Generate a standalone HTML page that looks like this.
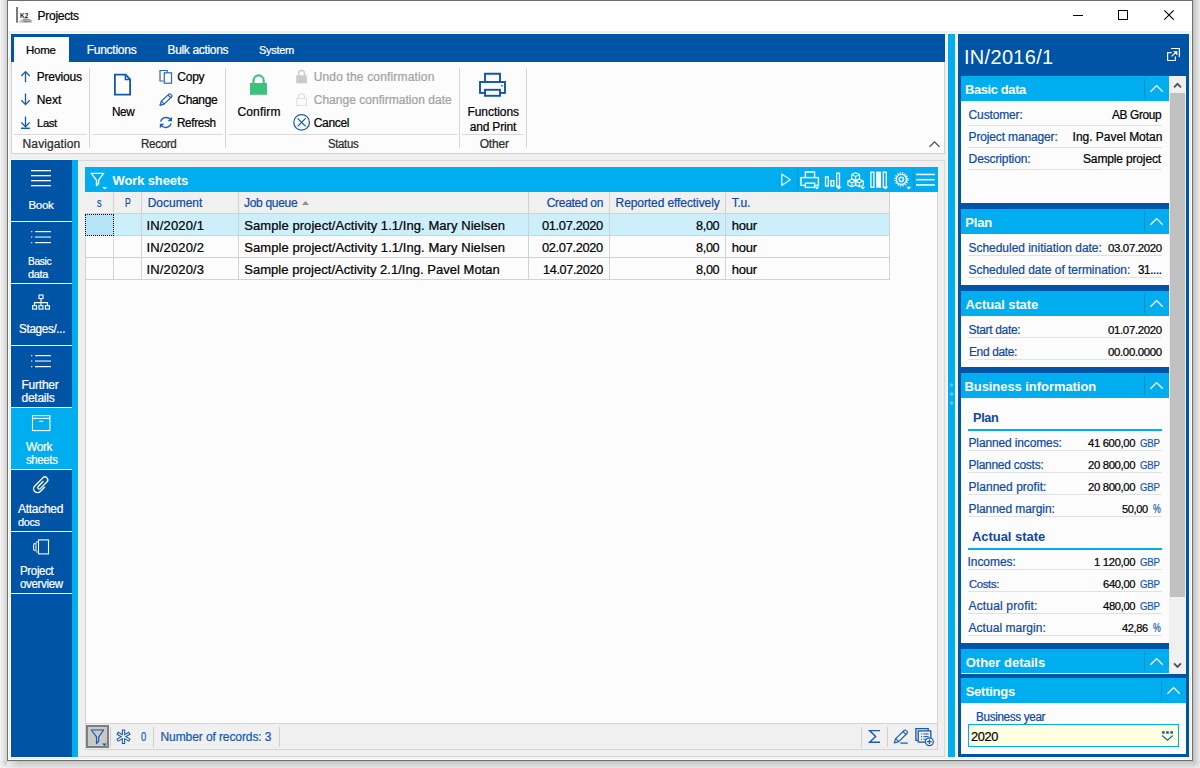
<!DOCTYPE html>
<html lang="en">
<head>
<meta charset="utf-8">
<title>Projects</title>
<style>
*{box-sizing:border-box;margin:0;padding:0}
html,body{width:1200px;height:768px;overflow:hidden}
body{position:relative;background:#e4e4e4;font-family:"Liberation Sans",sans-serif;font-size:12px;color:#000}
.a,.t,.vs,.hs,.sl,.sec,.bd,.rl,.cl,.gl{position:absolute}
.t{white-space:nowrap;-webkit-text-stroke:0.22px currentColor}
svg{position:absolute;overflow:visible}
#shl{left:0;top:0;width:7px;height:761px;background:linear-gradient(90deg,#f6f6f6,#d2d2d2)}
#shr{left:1193px;top:0;width:7px;height:761px;background:linear-gradient(90deg,#c2c2c2,#ececec)}
#shb{left:7px;top:761px;width:1186px;height:7px;background:linear-gradient(180deg,#c5c5c5,#e3e3e3)}
#shc3{left:7px;top:761px;width:12px;height:7px;background:linear-gradient(90deg,rgba(238,238,238,.85),rgba(238,238,238,0))}
#shc1{left:0;top:761px;width:7px;height:7px;background:radial-gradient(circle at 100% 0,#c4c4c4,#f0f0f0 7px)}
#shc2{left:1193px;top:761px;width:7px;height:7px;background:radial-gradient(circle at 0 0,#bdbdbd,#e6e6e6 7px)}
#win{left:7px;top:0;width:1186px;height:761px;background:#f0f0f0;border:1px solid #6f6f6f;box-shadow:inset 0 0 0 1px #fff}
#title{left:8px;top:1px;width:1184px;height:30px;background:#fff}
#botw{left:10px;top:159px;width:69px;height:599px;background:#fbf8f6}
#tabbar{left:11px;top:34px;width:934px;height:28px;background:#0054a6;box-shadow:0 0 0 1px #fbf8f6}
#tabhome{left:14px;top:37px;width:55px;height:26px;background:#fcfcfc}
#ribbon{left:11px;top:62px;width:934px;height:92px;background:#fcfcfc;border:1px solid #d2d2d2;border-top:none}
.vs{width:1px;background:#d6d6d6;top:68px;height:80px}
.hs{height:1px;background:#d9d9d9;top:134px}
#side{left:11px;top:160px;width:61px;height:597px;background:#0054a6}
#sidecy{left:72px;top:160px;width:6px;height:597px;background:#00adee}
#sidesel{left:11px;top:408px;width:61px;height:61px;background:#00adee}
.sl{left:11px;width:61px;height:1px;background:#fff}
#cframe{left:78px;top:160px;width:867px;height:597px;border:1px solid #d9d9d9;border-left:none}
#gpanel{left:85px;top:192px;width:853px;height:558px;background:#fcfcfc;border:1px solid #d4d4d4;border-top:none}
#ghead{left:85px;top:167px;width:853px;height:25px;background:#00adee}
#colh{left:85px;top:192px;width:805px;height:22px;background:#f0f0f0;border-bottom:1px solid #d2d2d2;border-right:1px solid #d2d2d2}
#rowsel{left:85px;top:214px;width:804px;height:21px;background:#cdeefb}
#cellsel{left:85px;top:214px;width:29px;height:22px;background:#b5e4f8;border:1px dotted #000}
.cl{width:1px;background:#d2d2d2;top:192px;height:88px}
.gl{height:1px;background:#d2d2d2;left:85px;width:805px}
#sbar{left:86px;top:723px;width:851px;height:26px;background:#f0f0f0;border-top:1px solid #d4d4d4}
#fbtn{left:86px;top:725px;width:23px;height:23px;background:#c9c9c9;border:2px solid #7e7e7e}
.ss{position:absolute;width:1px;background:#d0d0d0;top:727px;height:20px}
#split{left:948px;top:34px;width:7px;height:723px;background:#00adee;box-shadow:0 0 0 1px #fbf8f6}
#rpanel{left:958px;top:34px;width:231px;height:723px;background:#0054a6;box-shadow:0 0 0 1px #fbf8f6}
.sec{left:961px;width:208px;height:25px;background:#00adee}
.sec i{position:absolute;left:183px;top:2px;width:1px;height:21px;background:#0090cc}
.bd{left:961px;width:208px;background:#fcfcfc}
.rl{left:968px;width:194px;height:1px;background:#e1e1e1}
.cy{position:absolute;left:968px;width:194px;height:2px;background:#00adee}
#scr{left:1169px;top:76px;width:17px;height:598px;background:#f0f0f0}
#thumb{left:1170px;top:93px;width:15px;height:504px;background:#c1c1c1}
#inp{left:968px;top:724px;width:211px;height:23px;background:#ffffe1;border:1px solid #00adee}
</style>
</head>
<body>
<div class="a" id="shl"></div><div class="a" id="shr"></div><div class="a" id="shb"></div><div class="a" id="shc1"></div><div class="a" id="shc3"></div><div class="a" id="shc2"></div>
<div class="a" id="win"></div>
<div class="a" id="title"></div>
<div class="a" id="botw"></div>
<div class="a" id="tabbar"></div>
<div class="a" id="tabhome"></div>
<div class="a" id="ribbon"></div>
<div class="vs" style="left:89px"></div><div class="vs" style="left:225px"></div><div class="vs" style="left:459px"></div><div class="vs" style="left:526px"></div>
<div class="hs" style="left:14px;width:73px"></div><div class="hs" style="left:92px;width:131px"></div><div class="hs" style="left:228px;width:229px"></div><div class="hs" style="left:462px;width:62px"></div>
<div class="a" id="side"></div><div class="a" id="sidecy"></div><div class="a" id="sidesel"></div>
<div class="sl" style="top:221px"></div><div class="sl" style="top:283px"></div><div class="sl" style="top:345px"></div><div class="sl" style="top:407px"></div><div class="sl" style="top:469px"></div><div class="sl" style="top:531px"></div><div class="sl" style="top:593px"></div>
<div class="a" id="cframe"></div>
<div class="a" id="gpanel"></div><div class="a" id="ghead"></div>
<div class="a" id="colh"></div>
<div class="a" id="rowsel"></div>
<div class="gl" style="top:235px"></div><div class="gl" style="top:257px"></div><div class="gl" style="top:279px"></div>
<div class="cl" style="left:113px"></div><div class="cl" style="left:141px"></div><div class="cl" style="left:238px"></div><div class="cl" style="left:528px"></div><div class="cl" style="left:609px"></div><div class="cl" style="left:725px"></div><div class="cl" style="left:889px"></div>
<div class="a" id="cellsel"></div>
<div class="a" id="sbar"></div><div class="a" id="fbtn"></div>
<div class="ss" style="left:110px"></div><div class="ss" style="left:153px"></div><div class="ss" style="left:279px"></div><div class="ss" style="left:861px"></div><div class="ss" style="left:887px"></div>
<div class="a" id="split"></div>
<div class="a" id="rpanel"></div>
<div class="a" id="scr"></div><div class="a" id="thumb"></div>
<div class="sec" style="top:76px"><i></i></div><div class="bd" style="top:101px;height:102px"></div>
<div class="rl" style="top:125px"></div><div class="rl" style="top:147px"></div><div class="rl" style="top:169px"></div>
<div class="sec" style="top:209px"><i></i></div><div class="bd" style="top:234px;height:51px"></div>
<div class="rl" style="top:255px"></div><div class="rl" style="top:277px"></div>
<div class="sec" style="top:291px"><i></i></div><div class="bd" style="top:316px;height:51px"></div>
<div class="rl" style="top:337px"></div><div class="rl" style="top:359px"></div>
<div class="sec" style="top:373px"><i></i></div><div class="bd" style="top:398px;height:245px"></div>
<div class="cy" style="top:429px"></div>
<div class="rl" style="top:450px"></div><div class="rl" style="top:472px"></div><div class="rl" style="top:494px"></div><div class="rl" style="top:516px"></div>
<div class="cy" style="top:548px"></div>
<div class="rl" style="top:569px"></div><div class="rl" style="top:591px"></div><div class="rl" style="top:613px"></div><div class="rl" style="top:635px"></div>
<div class="sec" style="top:649px;height:24px"><i></i></div><div class="bd" style="top:673px;height:1px"></div>
<div class="sec" style="top:678px;width:225px"><i style="left:200px"></i></div><div class="bd" style="top:703px;height:51px;width:225px"></div>
<div class="a" id="inp"></div>
<svg width="1200" height="768" viewBox="0 0 1200 768" style="left:0;top:0" fill="none">
<!-- title bar -->
<g id="appicon">
<defs><linearGradient id="k2g" x1="0" y1="0" x2="1" y2="0"><stop offset="0" stop-color="#b0b0b0" stop-opacity=".45"/><stop offset=".5" stop-color="#7c7c7c"/><stop offset="1" stop-color="#8e8e8e" stop-opacity=".9"/></linearGradient></defs>
<rect x="16" y="7" width="2" height="15.6" fill="#7b7b7b"/>
<path d="M18 22.6V21.4C21 20.6 22.5 18.6 25.5 18.4C28 18.3 30 19.2 31.6 20V22.6Z" fill="url(#k2g)"/>
<path d="M21.5 21.6C24 20 27 19.6 30.5 20.9" stroke="#d8d8d8" stroke-width="0.7"/>
<text x="20" y="17.8" font-family="Liberation Sans, sans-serif" font-size="6.4" font-weight="bold" fill="#1a1a1a" textLength="8.2" lengthAdjust="spacingAndGlyphs">K2</text>
</g>
<g stroke="#000" stroke-width="1">
<path d="M1073 15.5H1083"/>
<rect x="1118.5" y="10.5" width="9" height="9"/>
<path d="M1164.3 10.3L1173.7 19.7M1173.7 10.3L1164.3 19.7" stroke-width="1.1"/>
</g>
<!-- ribbon: navigation arrows -->
<g stroke="#1659b0" stroke-width="1.3" stroke-linecap="butt">
<path d="M25.5 82.3V71.8M21.3 76L25.5 71.6L29.7 76"/>
<path d="M25.5 93.6V104.4M21.3 100.2L25.5 104.6L29.7 100.2"/>
<path d="M25.5 116.6V126.6M21.3 122.4L25.5 126.8L29.7 122.4"/>
<path d="M21 128.3H30" stroke-width="1.5"/>
</g>
<!-- New -->
<g stroke="#1258ad" stroke-width="1.8" stroke-linejoin="miter">
<path d="M114.9 74.6H125.6L130.1 79.4V94.7H114.9Z"/>
<path d="M125.4 74.6V79.6H130.1" stroke-width="1.5"/>
</g>
<!-- Copy -->
<g stroke="#2b68b8" stroke-width="1.2">
<path d="M163.6 81H160V70.5H167.2V72.4"/>
<rect x="164.3" y="72.8" width="7.2" height="10.4"/>
</g>
<!-- pencil (Change) -->
<g stroke="#1f5fb3" stroke-width="1.2" stroke-linejoin="round">
<path d="M160 105.3L161.3 101.2L169.2 93.9C170 93.3 172.6 95.6 171.9 96.5L164.1 104.1Z"/>
<path d="M161.3 101.2L164.1 104.1M168 95L170.8 97.7"/>
</g>
<!-- Refresh -->
<g stroke="#1f5fb3" stroke-width="1.3">
<path d="M160.7 121.6C161.6 117.6 167.2 116 170.4 119.4"/>
<path d="M171.1 123.4C170.2 127.4 164.6 129 161.4 125.6"/>
</g>
<path d="M172 116.7V121.3H167.5Z" fill="#1f5fb3"/>
<path d="M159.8 128.3V123.7H164.3Z" fill="#1f5fb3"/>
<!-- green lock -->
<rect x="250" y="83" width="17" height="11.8" fill="#3ec17e"/>
<path d="M253.5 83.5V80.6A5.1 5.2 0 0 1 263.7 80.6V83.5" stroke="#3ec17e" stroke-width="2.2"/>
<!-- grey filled lock -->
<rect x="296.2" y="75.3" width="10.7" height="8" fill="#c9cacc"/>
<path d="M298.7 75.8V73.4A2.9 2.9 0 0 1 304.5 73.4V75.8" stroke="#c9cacc" stroke-width="1.3"/>
<!-- outlined lock -->
<rect x="296.7" y="98.5" width="9.7" height="6.9" stroke="#dedede" stroke-width="1"/>
<path d="M298.7 98.5V96.7A2.9 2.9 0 0 1 304.5 96.7V98.5" stroke="#dedede" stroke-width="1.1"/>
<!-- cancel -->
<g stroke="#1a5caa" stroke-width="1.25">
<circle cx="301.6" cy="122.4" r="7.8"/>
<path d="M297.6 118.4L305.6 126.4M305.6 118.4L297.6 126.4"/>
</g>
<!-- printer big -->
<g stroke="#0d57a9" stroke-width="1.9">
<path d="M485 82V73.8H500V82"/>
<rect x="480" y="82" width="25" height="10.9"/>
<rect x="485" y="89.8" width="15" height="6" fill="#fcfcfc"/>
</g>
<rect x="501.2" y="85" width="1.6" height="1.3" fill="#0d57a9"/>
<!-- ribbon collapse caret -->
<path d="M929.5 146.8L934.5 141.8L939.5 146.8" stroke="#444" stroke-width="1.2"/>
</svg>

<svg width="1200" height="768" viewBox="0 0 1200 768" style="left:0;top:0" fill="none">
<!-- sidebar: Book hamburger -->
<g fill="#fff">
<rect x="31" y="170" width="20" height="1.3"/><rect x="31" y="175" width="20" height="1.3"/><rect x="31" y="180" width="20" height="1.3"/><rect x="31" y="185" width="20" height="1.3"/>
</g>
<!-- list icons -->
<g fill="#fff" id="lst1">
<rect x="35" y="231" width="16" height="1.2"/><rect x="35" y="236.4" width="16" height="1.3" opacity=".8"/><rect x="35" y="242" width="16" height="1.2"/>
<rect x="31" y="231" width="1.3" height="1.2"/><rect x="31" y="236.4" width="1.3" height="1.3" opacity=".8"/><rect x="31" y="242" width="1.3" height="1.2"/>
</g>
<g fill="#fff" id="lst2">
<rect x="35" y="355" width="16" height="1.2"/><rect x="35" y="360.4" width="16" height="1.3" opacity=".8"/><rect x="35" y="366" width="16" height="1.2"/>
<rect x="31" y="355" width="1.3" height="1.2"/><rect x="31" y="360.4" width="1.3" height="1.3" opacity=".8"/><rect x="31" y="366" width="1.3" height="1.2"/>
</g>
<!-- stages org chart -->
<g stroke="#fff" stroke-width="1.1">
<rect x="39" y="295" width="4" height="3.6"/>
<path d="M41 298.6V305.2M34.5 305.4V302.6H47.5V305.4"/>
<rect x="32.6" y="305.7" width="4" height="3.4"/><rect x="39" y="305.7" width="4" height="3.4"/><rect x="45.4" y="305.7" width="4" height="3.4"/>
</g>
<!-- work sheets box -->
<g stroke="#fff" stroke-width="1.1">
<rect x="32.5" y="415.6" width="17.4" height="15"/>
<path d="M32.5 418.4H49.9"/>
<path d="M39.2 421.3H43.2" stroke-width="1.2" opacity=".85"/>
</g>
<!-- paperclip -->
<g transform="translate(41.2 485) rotate(45)" stroke="#fff" stroke-width="1.35" stroke-linecap="round">
<path d="M3.9 -0.8V5.2A3.9 3.9 0 0 1 -3.9 5.2V-6.2A2.9 2.9 0 0 1 1.9 -6.2V3.2A1.5 1.5 0 0 1 -1.1 3.2V-3.8"/>
</g>
<!-- project overview -->
<g stroke="#fff" stroke-width="1.1">
<rect x="38.5" y="539.9" width="10" height="14"/>
<path d="M38.3 541.9H36.6C35.6 541.9 35.6 552 36.6 552H38.3" opacity=".75"/>
<path d="M35.4 543.6H34.4C33.3 543.6 33.3 550.4 34.4 550.4H35.4"/>
</g>
<!-- grid header: filter -->
<g stroke="#fff" stroke-width="1.4" stroke-linejoin="round">
<path d="M91.3 173.4H103.7L98.6 180.2V183.4L96.5 185.6V180.2Z"/>
</g>
<path d="M102.2 187H107.2L104.7 189.5Z" fill="#fff"/>
<!-- play -->
<path d="M781.8 174V185.4L790.3 179.7Z" stroke="#fff" stroke-width="1.3" stroke-linejoin="round" opacity=".85"/>
<path d="M797.5 169V190M913.5 169V190" stroke="#0091cf" stroke-width="1"/>
<!-- printer small -->
<g stroke="#fff" stroke-width="1.4">
<path d="M805.4 177.5V172H814.6V177.5"/>
<rect x="801" y="177.6" width="17.4" height="7.8"/>
<rect x="805.4" y="183.2" width="9.2" height="4.2" fill="#00adee"/>
</g>
<path d="M814.4 186.7H819.4L816.9 189.4Z" fill="#fff"/>
<!-- bar chart -->
<g stroke="#fff" stroke-width="1.3">
<rect x="825.5" y="177" width="2.8" height="9"/><rect x="831" y="180.6" width="2.8" height="5.4"/><rect x="836.7" y="173.2" width="2.8" height="13"/>
</g>
<path d="M835.7 186.7H841.7L838.7 189.6Z" fill="#fff"/>
<!-- cubes -->
<g stroke="#fff" stroke-width="1.15" stroke-linejoin="round">
<path d="M855.6 172.8L859.6 174.6V178.6L855.6 180.4L851.6 178.6V174.6Z"/><path d="M851.6 174.6L855.6 176.4L859.6 174.6M855.6 176.4V180.4"/>
<path d="M851.9 179.2L855.9 181V185L851.9 186.8L847.9 185V181Z"/><path d="M847.9 181L851.9 182.8L855.9 181M851.9 182.8V186.8"/>
<path d="M859.3 179.2L863.3 181V185L859.3 186.8L855.3 185V181Z"/><path d="M855.3 181L859.3 182.8L863.3 181M859.3 182.8V186.8"/>
</g>
<path d="M860.3 186.8H865.3L862.8 189.5Z" fill="#fff"/>
<!-- columns -->
<rect x="870.9" y="172.2" width="3" height="15" stroke="#fff" stroke-width="1.3"/>
<rect x="876.2" y="171.6" width="4.8" height="16.1" fill="#fff"/>
<rect x="883.3" y="172.2" width="3" height="15" stroke="#fff" stroke-width="1.3"/>
<path d="M882.4 186.8H888.4L885.4 189.6Z" fill="#fff"/>
<!-- gear -->
<g stroke="#fff">
<circle cx="901.4" cy="179.4" r="5" stroke-width="1.3"/>
<circle cx="901.4" cy="179.4" r="2.1" stroke-width="1.4"/>
<circle cx="901.4" cy="179.4" r="6.4" stroke-width="1.5" stroke-dasharray="1.2 1.313"/>
</g>
<path d="M906.1 186.8H911.3L908.7 189.6Z" fill="#fff"/>
<!-- hamburger -->
<g fill="#fff"><rect x="916" y="173.7" width="19" height="1.5"/><rect x="916" y="178.9" width="19" height="1.5"/><rect x="916" y="184.2" width="19" height="1.5"/></g>
<!-- sort arrow -->
<path d="M302 205H309L305.5 201Z" fill="#8f8f8f"/>
</svg>

<svg width="1200" height="768" viewBox="0 0 1200 768" style="left:0;top:0" fill="none">
<!-- status: filter button icon -->
<path d="M91.3 730H103.7L98.7 736.9V741.2L96.5 743.6V736.9Z" stroke="#1659b0" stroke-width="1.2" stroke-linejoin="round"/>
<path d="M102 743.6H107L104.5 746.1Z" fill="#1659b0"/>
<!-- snowflake -->
<g stroke="#1659b0" stroke-width="3.4" stroke-linecap="butt">
<path d="M123.5 729.4V744M117.2 733L129.8 740.4M129.8 733L117.2 740.4"/>
</g>
<g stroke="#f0f0f0" stroke-width="1.3" stroke-linecap="butt">
<path d="M123.5 730.4V743M118.1 733.5L128.9 739.9M128.9 733.5L118.1 739.9"/>
</g>
<!-- sigma -->
<path d="M880 730.6H869.6L875.6 736.4L869.6 742.2H880" stroke="#1a5caa" stroke-width="1.4" stroke-linejoin="miter"/>
<!-- pencil with underline -->
<g stroke="#1f5fb3" stroke-width="1.2" stroke-linejoin="round">
<path d="M894.3 743L895.7 738.6L904.4 730.2C905.3 729.4 908.2 732 907.4 733L898.8 741.6Z"/>
<path d="M895.7 738.6L898.8 741.6M903 731.6L906 734.4"/>
<path d="M900.4 743.1H907.8" stroke-width="1.3"/>
</g>
<!-- docs + -->
<g stroke="#1659b0" stroke-width="1.3">
<path d="M917.6 740.4H915.9V728.6H928.2V730.4"/>
<rect x="918.2" y="730.9" width="12.6" height="11.2" fill="#f0f0f0"/>
<path d="M921 734H922.2M923.4 734H928.6M921 736.6H922.2M923.4 736.6H928.6M921 739.2H922.2M923.4 739.2H926" stroke-width="1"/>
<circle cx="929.4" cy="741.7" r="3.9" fill="#f0f0f0" stroke-width="1.2"/>
<path d="M927.2 741.7H931.6M929.4 739.5V743.9" stroke-width="1.2"/>
</g>
<!-- right panel popup icon -->
<g stroke="#fff" stroke-width="1.2">
<path d="M1171 48.5H1179.4V57"/>
<path d="M1171.6 52.7H1167.6V60.5H1175.4V56.6"/>
<path d="M1171.5 56.4L1176.3 52"/>
</g>
<path d="M1173.2 51.2H1177.4V55.4Z" fill="#fff"/>
<!-- chevrons -->
<g stroke="#fff" stroke-width="1.3">
<path d="M1150.4 91.8L1156.6 85.6L1162.8 91.8"/>
<path d="M1150.4 224.8L1156.6 218.6L1162.8 224.8"/>
<path d="M1150.4 306.8L1156.6 300.6L1162.8 306.8"/>
<path d="M1150.4 388.8L1156.6 382.6L1162.8 388.8"/>
<path d="M1150.4 664.8L1156.6 658.6L1162.8 664.8"/>
<path d="M1167.4 693.8L1173.6 687.6L1179.8 693.8"/>
</g>
<!-- scrollbar arrows -->
<g stroke="#505050" stroke-width="1.8">
<path d="M1174 87.4L1177.5 83.8L1181 87.4"/>
<path d="M1174 663.4L1177.5 667L1181 663.4"/>
</g>
<!-- input dropdown -->
<g fill="#1f5cae"><rect x="1162" y="731.2" width="2.7" height="2.5"/><rect x="1166.1" y="731.2" width="2.7" height="2.5"/><rect x="1170.3" y="731.2" width="2.7" height="2.5"/></g>
<path d="M1162.2 735.5L1167.5 740.2L1172.8 735.5" stroke="#1f5cae" stroke-width="1.2"/>
<!-- splitter dots -->
<g fill="#55c9f4"><circle cx="951.6" cy="385" r="1.8"/><circle cx="951.6" cy="394" r="1.8"/><circle cx="951.6" cy="403" r="1.8"/></g>
</svg>

<!--ICONS4-->
<span class="t" style="left:37.50px;top:9.00px;font-size:12px;line-height:14px;letter-spacing:-0.264px;color:#000">Projects</span>
<span class="t" style="left:26.00px;top:43.00px;font-size:11.5px;line-height:14px;letter-spacing:-0.260px;color:#000">Home</span>
<span class="t" style="left:86.70px;top:43.00px;font-size:12px;line-height:14px;letter-spacing:-0.253px;color:#fff">Functions</span>
<span class="t" style="left:167.50px;top:43.00px;font-size:12px;line-height:14px;letter-spacing:-0.336px;color:#fff">Bulk actions</span>
<span class="t" style="left:259.00px;top:43.00px;font-size:11.5px;line-height:14px;letter-spacing:-0.350px;color:#fff;transform:scaleX(0.964);transform-origin:0 0">System</span>
<span class="t" style="left:36.74px;top:70.00px;font-size:12px;line-height:14px;letter-spacing:-0.204px;color:#000">Previous</span>
<span class="t" style="left:36.74px;top:93.00px;font-size:12px;line-height:14px;letter-spacing:-0.060px;color:#000">Next</span>
<span class="t" style="left:37.30px;top:116.00px;font-size:11.5px;line-height:14px;letter-spacing:-0.350px;color:#000;transform:scaleX(0.975);transform-origin:0 0">Last</span>
<span class="t" style="left:22.60px;top:137.00px;font-size:12px;line-height:14px;letter-spacing:0.108px;color:#2a2a2a">Navigation</span>
<span class="t" style="left:111.80px;top:105.00px;font-size:12px;line-height:14px;letter-spacing:-0.350px;color:#000;transform:scaleX(0.977);transform-origin:0 0">New</span>
<span class="t" style="left:177.30px;top:70.00px;font-size:12px;line-height:14px;letter-spacing:-0.238px;color:#000">Copy</span>
<span class="t" style="left:177.30px;top:93.00px;font-size:12px;line-height:14px;letter-spacing:-0.332px;color:#000">Change</span>
<span class="t" style="left:177.30px;top:116.00px;font-size:12px;line-height:14px;letter-spacing:-0.350px;color:#000;transform:scaleX(0.976);transform-origin:0 0">Refresh</span>
<span class="t" style="left:140.50px;top:137.00px;font-size:12px;line-height:14px;letter-spacing:-0.350px;color:#2a2a2a;transform:scaleX(0.970);transform-origin:0 0">Record</span>
<span class="t" style="left:237.40px;top:105.00px;font-size:12px;line-height:14px;letter-spacing:0.182px;color:#000">Confirm</span>
<span class="t" style="left:313.70px;top:70.00px;font-size:12px;line-height:14px;letter-spacing:0.164px;color:#a2a2a2">Undo the confirmation</span>
<span class="t" style="left:313.70px;top:93.00px;font-size:12px;line-height:14px;letter-spacing:0.024px;color:#a2a2a2">Change confirmation date</span>
<span class="t" style="left:313.70px;top:116.00px;font-size:12px;line-height:14px;letter-spacing:-0.317px;color:#000">Cancel</span>
<span class="t" style="left:327.60px;top:137.00px;font-size:12px;line-height:14px;letter-spacing:-0.350px;color:#2a2a2a;transform:scaleX(0.948);transform-origin:0 0">Status</span>
<span class="t" style="left:467.50px;top:105.00px;font-size:12px;line-height:14px;letter-spacing:-0.066px;color:#000">Functions</span>
<span class="t" style="left:469.70px;top:120.00px;font-size:12px;line-height:14px;letter-spacing:-0.174px;color:#000">and Print</span>
<span class="t" style="left:479.70px;top:137.00px;font-size:12px;line-height:14px;letter-spacing:-0.179px;color:#2a2a2a">Other</span>
<span class="t" style="left:28.50px;top:198.00px;font-size:11.5px;line-height:14px;letter-spacing:-0.321px;color:#fff">Book</span>
<span class="t" style="left:27.50px;top:254.00px;font-size:11.5px;line-height:14px;letter-spacing:-0.350px;color:#fff;transform:scaleX(0.885);transform-origin:0 0">Basic</span>
<span class="t" style="left:27.50px;top:267.00px;font-size:11.5px;line-height:14px;letter-spacing:-0.350px;color:#fff;transform:scaleX(0.958);transform-origin:0 0">data</span>
<span class="t" style="left:18.50px;top:322.00px;font-size:12px;line-height:14px;letter-spacing:-0.350px;color:#fff;transform:scaleX(0.976);transform-origin:0 0">Stages/...</span>
<span class="t" style="left:21.50px;top:378.00px;font-size:12px;line-height:14px;letter-spacing:-0.230px;color:#fff">Further</span>
<span class="t" style="left:21.50px;top:391.00px;font-size:12px;line-height:14px;letter-spacing:-0.248px;color:#fff">details</span>
<span class="t" style="left:25.60px;top:440.00px;font-size:12px;line-height:14px;letter-spacing:-0.350px;color:#fff;transform:scaleX(0.992);transform-origin:0 0">Work</span>
<span class="t" style="left:25.60px;top:453.00px;font-size:12px;line-height:14px;letter-spacing:-0.350px;color:#fff;transform:scaleX(0.949);transform-origin:0 0">sheets</span>
<span class="t" style="left:18.08px;top:502.00px;font-size:12px;line-height:14px;letter-spacing:-0.296px;color:#fff">Attached</span>
<span class="t" style="left:17.60px;top:515.00px;font-size:11.5px;line-height:14px;letter-spacing:-0.350px;color:#fff;transform:scaleX(0.950);transform-origin:0 0">docs</span>
<span class="t" style="left:19.50px;top:564.00px;font-size:12px;line-height:14px;letter-spacing:-0.350px;color:#fff;transform:scaleX(0.958);transform-origin:0 0">Project</span>
<span class="t" style="left:19.50px;top:577.00px;font-size:12px;line-height:14px;letter-spacing:-0.350px;color:#fff;transform:scaleX(0.962);transform-origin:0 0">overview</span>
<span class="t" style="left:112.60px;top:173.00px;font-size:13px;line-height:15px;letter-spacing:-0.144px;color:#fff;font-weight:bold;-webkit-text-stroke:0">Work sheets</span>
<span class="t" style="left:97.40px;top:196.00px;font-size:12px;line-height:14px;letter-spacing:0.000px;color:#10499f;transform:scaleX(0.767);transform-origin:0 0">s</span>
<span class="t" style="left:124.60px;top:196.00px;font-size:12px;line-height:14px;letter-spacing:0.000px;color:#10499f;transform:scaleX(0.713);transform-origin:0 0">P</span>
<span class="t" style="left:147.70px;top:196.00px;font-size:12px;line-height:14px;letter-spacing:-0.008px;color:#10499f">Document</span>
<span class="t" style="left:244.00px;top:196.00px;font-size:12px;line-height:14px;letter-spacing:-0.297px;color:#10499f">Job queue</span>
<span class="t" style="left:546.70px;top:196.00px;font-size:12px;line-height:14px;letter-spacing:-0.295px;color:#10499f">Created on</span>
<span class="t" style="left:615.60px;top:196.00px;font-size:12px;line-height:14px;letter-spacing:-0.091px;color:#10499f">Reported effectively</span>
<span class="t" style="left:731.70px;top:196.00px;font-size:12px;line-height:14px;letter-spacing:-0.236px;color:#10499f">T.u.</span>
<span class="t" style="left:146.50px;top:218.00px;font-size:13px;line-height:15px;letter-spacing:0.145px;color:#000">IN/2020/1</span>
<span class="t" style="left:244.30px;top:218.00px;font-size:13px;line-height:15px;letter-spacing:0.061px;color:#000">Sample project/Activity 1.1/Ing. Mary Nielsen</span>
<span class="t" style="left:542.30px;top:218.00px;font-size:13px;line-height:15px;letter-spacing:-0.350px;color:#000;transform:scaleX(0.989);transform-origin:0 0">01.07.2020</span>
<span class="t" style="left:696.30px;top:218.00px;font-size:13px;line-height:15px;letter-spacing:-0.350px;color:#000;transform:scaleX(0.974);transform-origin:0 0">8,00</span>
<span class="t" style="left:731.70px;top:218.00px;font-size:13px;line-height:15px;letter-spacing:-0.230px;color:#000">hour</span>
<span class="t" style="left:146.50px;top:240.00px;font-size:13px;line-height:15px;letter-spacing:0.145px;color:#000">IN/2020/2</span>
<span class="t" style="left:244.30px;top:240.00px;font-size:13px;line-height:15px;letter-spacing:0.061px;color:#000">Sample project/Activity 1.1/Ing. Mary Nielsen</span>
<span class="t" style="left:542.30px;top:240.00px;font-size:13px;line-height:15px;letter-spacing:-0.350px;color:#000;transform:scaleX(0.989);transform-origin:0 0">02.07.2020</span>
<span class="t" style="left:696.30px;top:240.00px;font-size:13px;line-height:15px;letter-spacing:-0.350px;color:#000;transform:scaleX(0.974);transform-origin:0 0">8,00</span>
<span class="t" style="left:731.70px;top:240.00px;font-size:13px;line-height:15px;letter-spacing:-0.230px;color:#000">hour</span>
<span class="t" style="left:146.50px;top:262.00px;font-size:13px;line-height:15px;letter-spacing:0.145px;color:#000">IN/2020/3</span>
<span class="t" style="left:244.30px;top:262.00px;font-size:13px;line-height:15px;letter-spacing:0.028px;color:#000">Sample project/Activity 2.1/Ing. Pavel Motan</span>
<span class="t" style="left:543.30px;top:262.00px;font-size:13px;line-height:15px;letter-spacing:-0.350px;color:#000;transform:scaleX(0.973);transform-origin:0 0">14.07.2020</span>
<span class="t" style="left:696.30px;top:262.00px;font-size:13px;line-height:15px;letter-spacing:-0.350px;color:#000;transform:scaleX(0.974);transform-origin:0 0">8,00</span>
<span class="t" style="left:731.70px;top:262.00px;font-size:13px;line-height:15px;letter-spacing:-0.230px;color:#000">hour</span>
<span class="t" style="left:140.50px;top:730.00px;font-size:12px;line-height:14px;letter-spacing:0.000px;color:#1757b2;transform:scaleX(0.786);transform-origin:0 0">0</span>
<span class="t" style="left:160.50px;top:730.00px;font-size:12px;line-height:14px;letter-spacing:-0.091px;color:#1757b2">Number of records: 3</span>
<span class="t" style="left:964.00px;top:46.00px;font-size:20px;line-height:22px;letter-spacing:0.299px;color:#fff;-webkit-text-stroke:0">IN/2016/1</span>
<span class="t" style="left:964.75px;top:82.00px;font-size:13px;line-height:15px;letter-spacing:-0.350px;color:#fff;font-weight:bold;-webkit-text-stroke:0;transform:scaleX(0.990);transform-origin:0 0">Basic data</span>
<span class="t" style="left:968.60px;top:108.00px;font-size:12px;line-height:14px;letter-spacing:-0.152px;color:#10499f">Customer:</span>
<span class="t" style="left:968.60px;top:130.00px;font-size:12px;line-height:14px;letter-spacing:-0.150px;color:#10499f">Project manager:</span>
<span class="t" style="left:968.60px;top:152.00px;font-size:12px;line-height:14px;letter-spacing:-0.125px;color:#10499f">Description:</span>
<span class="t" style="left:1111.80px;top:108.00px;font-size:12px;line-height:14px;letter-spacing:-0.350px;color:#000;transform:scaleX(0.988);transform-origin:0 0">AB Group</span>
<span class="t" style="left:1072.60px;top:130.00px;font-size:12px;line-height:14px;letter-spacing:-0.015px;color:#000">Ing. Pavel Motan</span>
<span class="t" style="left:1083.00px;top:152.00px;font-size:12px;line-height:14px;letter-spacing:-0.150px;color:#000">Sample project</span>
<span class="t" style="left:965.35px;top:215.00px;font-size:13px;line-height:15px;letter-spacing:-0.171px;color:#fff;font-weight:bold;-webkit-text-stroke:0">Plan</span>
<span class="t" style="left:968.50px;top:241.00px;font-size:12px;line-height:14px;letter-spacing:-0.031px;color:#10499f">Scheduled initiation date:</span>
<span class="t" style="left:968.50px;top:263.00px;font-size:12px;line-height:14px;letter-spacing:-0.032px;color:#10499f">Scheduled date of termination:</span>
<span class="t" style="left:1108.00px;top:241.00px;font-size:11.5px;line-height:14px;letter-spacing:-0.350px;color:#000;transform:scaleX(0.995);transform-origin:0 0">03.07.2020</span>
<span class="t" style="left:1138.00px;top:263.00px;font-size:12px;line-height:14px;letter-spacing:-0.350px;color:#000;transform:scaleX(0.965);transform-origin:0 0">31....</span>
<span class="t" style="left:965.50px;top:297.00px;font-size:13px;line-height:15px;letter-spacing:-0.087px;color:#fff;font-weight:bold;-webkit-text-stroke:0">Actual state</span>
<span class="t" style="left:968.50px;top:323.00px;font-size:12px;line-height:14px;letter-spacing:-0.328px;color:#10499f">Start date:</span>
<span class="t" style="left:968.50px;top:345.00px;font-size:12px;line-height:14px;letter-spacing:-0.350px;color:#10499f;transform:scaleX(0.995);transform-origin:0 0">End date:</span>
<span class="t" style="left:1108.00px;top:323.00px;font-size:11.5px;line-height:14px;letter-spacing:-0.350px;color:#000;transform:scaleX(0.995);transform-origin:0 0">01.07.2020</span>
<span class="t" style="left:1108.00px;top:345.00px;font-size:11.5px;line-height:14px;letter-spacing:-0.350px;color:#000;transform:scaleX(0.995);transform-origin:0 0">00.00.0000</span>
<span class="t" style="left:964.44px;top:379.00px;font-size:13px;line-height:15px;letter-spacing:-0.060px;color:#fff;font-weight:bold;-webkit-text-stroke:0">Business information</span>
<span class="t" style="left:972.75px;top:410.00px;font-size:13px;line-height:15px;letter-spacing:-0.350px;color:#10499f;font-weight:bold;-webkit-text-stroke:0;transform:scaleX(0.977);transform-origin:0 0">Plan</span>
<span class="t" style="left:968.50px;top:436.00px;font-size:12px;line-height:14px;letter-spacing:-0.137px;color:#10499f">Planned incomes:</span>
<span class="t" style="left:968.50px;top:458.00px;font-size:12px;line-height:14px;letter-spacing:-0.268px;color:#10499f">Planned costs:</span>
<span class="t" style="left:968.50px;top:480.00px;font-size:12px;line-height:14px;letter-spacing:0.032px;color:#10499f">Planned profit:</span>
<span class="t" style="left:968.50px;top:502.00px;font-size:12px;line-height:14px;letter-spacing:-0.075px;color:#10499f">Planned margin:</span>
<span class="t" style="left:1088.00px;top:436.00px;font-size:11.5px;line-height:14px;letter-spacing:-0.350px;color:#000;transform:scaleX(0.980);transform-origin:0 0">41 600,00</span>
<span class="t" style="left:1088.00px;top:458.00px;font-size:11.5px;line-height:14px;letter-spacing:-0.350px;color:#000;transform:scaleX(0.984);transform-origin:0 0">20 800,00</span>
<span class="t" style="left:1088.00px;top:480.00px;font-size:11.5px;line-height:14px;letter-spacing:-0.350px;color:#000;transform:scaleX(0.984);transform-origin:0 0">20 800,00</span>
<span class="t" style="left:1121.75px;top:502.00px;font-size:11.5px;line-height:14px;letter-spacing:-0.350px;color:#000;transform:scaleX(0.958);transform-origin:0 0">50,00</span>
<span class="t" style="left:1139.50px;top:436.00px;font-size:11.5px;line-height:14px;letter-spacing:-0.350px;color:#1757b2;transform:scaleX(0.843);transform-origin:0 0">GBP</span>
<span class="t" style="left:1139.50px;top:458.00px;font-size:11.5px;line-height:14px;letter-spacing:-0.350px;color:#1757b2;transform:scaleX(0.843);transform-origin:0 0">GBP</span>
<span class="t" style="left:1139.50px;top:480.00px;font-size:11.5px;line-height:14px;letter-spacing:-0.350px;color:#1757b2;transform:scaleX(0.843);transform-origin:0 0">GBP</span>
<span class="t" style="left:1153.00px;top:502.00px;font-size:12px;line-height:14px;letter-spacing:0.000px;color:#1757b2;transform:scaleX(0.727);transform-origin:0 0">%</span>
<span class="t" style="left:971.92px;top:529.00px;font-size:13px;line-height:15px;letter-spacing:-0.035px;color:#10499f;font-weight:bold;-webkit-text-stroke:0">Actual state</span>
<span class="t" style="left:967.50px;top:555.00px;font-size:12px;line-height:14px;letter-spacing:-0.050px;color:#10499f">Incomes:</span>
<span class="t" style="left:968.50px;top:577.00px;font-size:11.5px;line-height:14px;letter-spacing:-0.350px;color:#10499f;transform:scaleX(0.984);transform-origin:0 0">Costs:</span>
<span class="t" style="left:968.50px;top:599.00px;font-size:12px;line-height:14px;letter-spacing:0.164px;color:#10499f">Actual profit:</span>
<span class="t" style="left:968.50px;top:621.00px;font-size:12px;line-height:14px;letter-spacing:0.049px;color:#10499f">Actual margin:</span>
<span class="t" style="left:1094.00px;top:555.00px;font-size:11.5px;line-height:14px;letter-spacing:-0.350px;color:#000;transform:scaleX(0.983);transform-origin:0 0">1 120,00</span>
<span class="t" style="left:1103.00px;top:577.00px;font-size:11.5px;line-height:14px;letter-spacing:-0.350px;color:#000;transform:scaleX(0.975);transform-origin:0 0">640,00</span>
<span class="t" style="left:1103.00px;top:599.00px;font-size:11.5px;line-height:14px;letter-spacing:-0.350px;color:#000;transform:scaleX(0.975);transform-origin:0 0">480,00</span>
<span class="t" style="left:1121.75px;top:621.00px;font-size:11.5px;line-height:14px;letter-spacing:-0.350px;color:#000;transform:scaleX(0.958);transform-origin:0 0">42,86</span>
<span class="t" style="left:1139.50px;top:555.00px;font-size:11.5px;line-height:14px;letter-spacing:-0.350px;color:#1757b2;transform:scaleX(0.843);transform-origin:0 0">GBP</span>
<span class="t" style="left:1139.50px;top:577.00px;font-size:11.5px;line-height:14px;letter-spacing:-0.350px;color:#1757b2;transform:scaleX(0.843);transform-origin:0 0">GBP</span>
<span class="t" style="left:1139.50px;top:599.00px;font-size:11.5px;line-height:14px;letter-spacing:-0.350px;color:#1757b2;transform:scaleX(0.843);transform-origin:0 0">GBP</span>
<span class="t" style="left:1153.00px;top:621.00px;font-size:12px;line-height:14px;letter-spacing:0.000px;color:#1757b2;transform:scaleX(0.727);transform-origin:0 0">%</span>
<span class="t" style="left:965.70px;top:655.00px;font-size:13px;line-height:15px;letter-spacing:0.005px;color:#fff;font-weight:bold;-webkit-text-stroke:0">Other details</span>
<span class="t" style="left:965.70px;top:684.00px;font-size:13px;line-height:15px;letter-spacing:-0.250px;color:#fff;font-weight:bold;-webkit-text-stroke:0">Settings</span>
<span class="t" style="left:975.50px;top:710.00px;font-size:12px;line-height:14px;letter-spacing:-0.350px;color:#10499f;transform:scaleX(0.976);transform-origin:0 0">Business year</span>
<span class="t" style="left:971.30px;top:729.00px;font-size:13px;line-height:15px;letter-spacing:-0.350px;color:#000;transform:scaleX(0.984);transform-origin:0 0">2020</span>
</body>
</html>
